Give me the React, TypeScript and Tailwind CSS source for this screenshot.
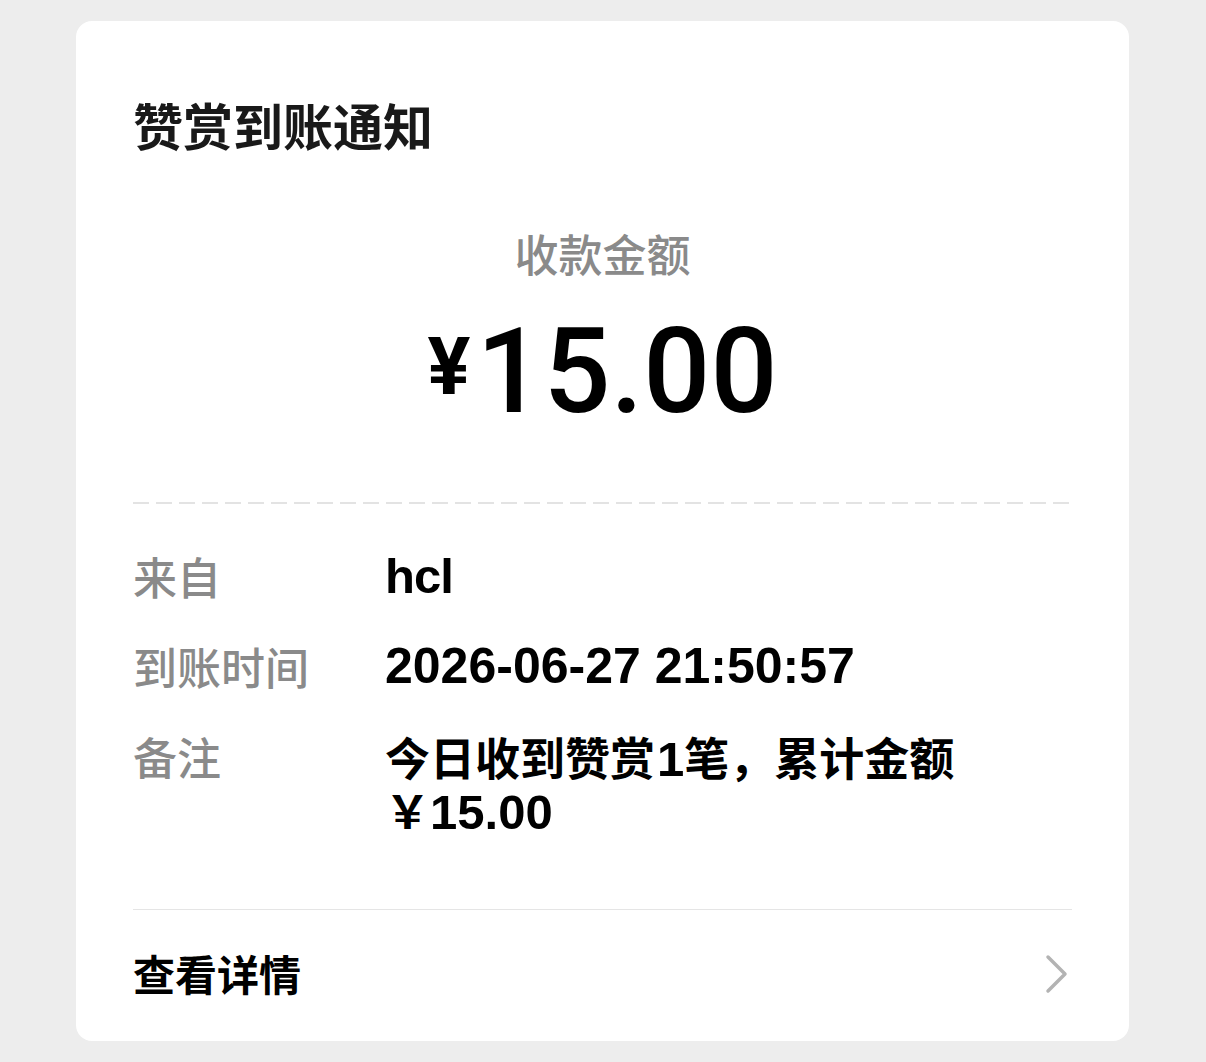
import React from "react";

const CJK = '"Noto Sans CJK SC", "Noto Sans", sans-serif';
const LAT = '"Liberation Sans", "Noto Sans CJK SC", sans-serif';

export default function App() {
  return (
    <div
      className="min-h-[1062px] w-[1206px] bg-[#ededed] pt-[21px]"
      style={{ fontFamily: CJK }}
    >
      <div className="ml-[76px] flex w-[1053px] flex-col rounded-[16px] bg-white px-[57px]">
        <div className="pt-[78px] text-[50px] font-bold leading-[50px] text-[#191919]">
          赞赏到账通知
        </div>

        <div className="mt-[82px] text-center text-[44px] font-medium leading-[44px] text-[#8a8a8a]">
          收款金额
        </div>

        <div className="mt-[38px] flex items-start justify-center leading-none text-black">
          <span
            className="mr-[6px] mt-[14px] text-[80px] font-bold leading-[80px]"
            style={{ fontFamily: '"Roboto", sans-serif' }}
          >
            ¥
          </span>
          <span
            className="text-[118px] font-medium leading-[118px]"
            style={{ fontFamily: '"Roboto", sans-serif' }}
          >
            15.00
          </span>
        </div>

        <div className="mt-[71px] h-[2px] bg-[linear-gradient(to_right,#e3e3e3_16px,transparent_16px)] bg-[length:23px_2px] bg-repeat-x" />

        <div className="mt-[46px] grid grid-cols-[252px_1fr] gap-y-[37px] text-[45px] leading-[53px]">
          <div className="h-[53px] text-[44px] font-medium text-[#8a8a8a]">来自</div>
          <div className="h-[53px] font-bold text-black" style={{ fontFamily: LAT }}>
            <span className="text-[49px] tracking-[-1px]">hcl</span>
          </div>

          <div className="h-[53px] text-[44px] font-medium text-[#8a8a8a]">到账时间</div>
          <div className="h-[53px] font-bold text-black" style={{ fontFamily: LAT }}>
            <span className="text-[50px]">2026-06-27 21:50:57</span>
          </div>

          <div className="h-[53px] text-[44px] font-medium text-[#8a8a8a]">备注</div>
          <div className="flex flex-col font-bold text-black">
            <div className="h-[53px] whitespace-nowrap">
              今日收到赞赏
              <span className="ml-[2px] text-[49px] leading-[53px]" style={{ fontFamily: LAT }}>1</span>
              笔，累计金额
            </div>
            <div className="h-[53px] whitespace-nowrap">
              ￥<span className="text-[49px] leading-[53px]" style={{ fontFamily: LAT }}>15.00</span>
            </div>
          </div>
        </div>

        <div className="mt-[73px] h-px bg-[#e5e5e5]" />

        <div className="flex h-[131px] items-center justify-between">
          <span className="-mt-[6px] text-[42px] font-bold leading-[50px] text-black">查看详情</span>
          <svg width="26" height="40" viewBox="0 0 26 40" className="mr-[2px] -mt-[4px]">
            <path
              d="M4 3 L21 20 L4 37"
              fill="none"
              stroke="#b3b3b3"
              strokeWidth="3.5"
              strokeLinecap="round"
              strokeLinejoin="round"
            />
          </svg>
        </div>
      </div>
    </div>
  );
}
